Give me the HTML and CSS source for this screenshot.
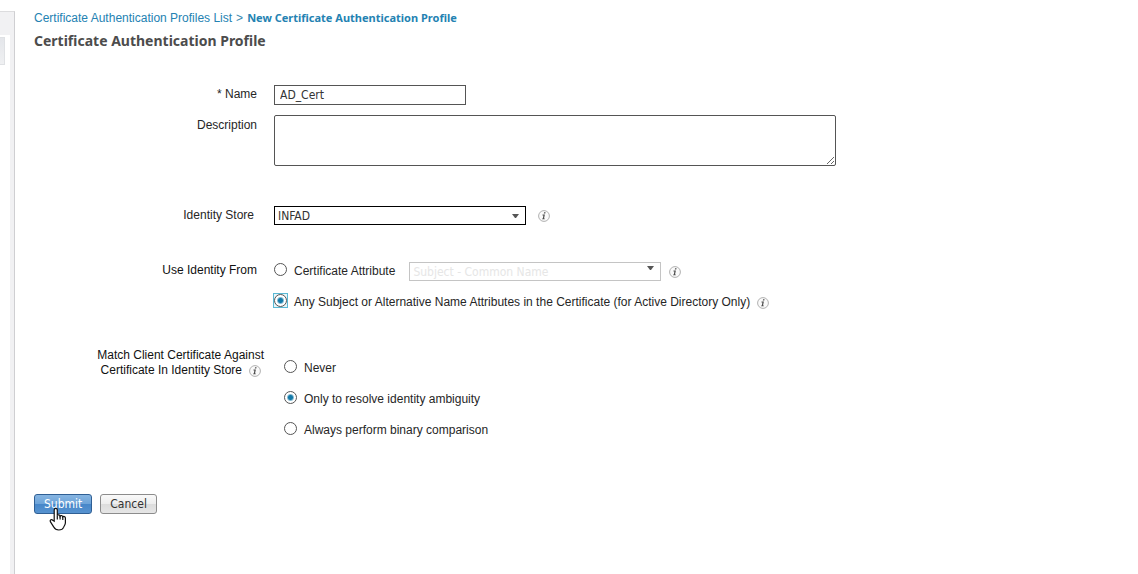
FILE: index.html
```html
<!DOCTYPE html>
<html lang="en">
<head>
<meta charset="utf-8">
<title>New Certificate Authentication Profile</title>
<link rel="stylesheet" href="styles.css">
</head>
<body>
<svg class="defs" aria-hidden="true">
  <symbol id="info" viewBox="0 0 12 12">
    <circle cx="6" cy="6" r="5.4" fill="#fafafa" stroke="#b0b0b0" stroke-width="1"/>
    <path d="M6.1 2.2h1.5l-.3 1.4H5.8zM4.5 4.6h2.4L6 8.4h.9l-.2.9H4.1l.2-.8h.5l.6-3h-.9z" fill="#4c4c4c"/>
  </symbol>
  <symbol id="arrow" viewBox="0 0 7 4">
    <path d="M0 0h7L4 4H3z" fill="#555"/>
  </symbol>
</svg>
<div class="page">
  <aside class="rail"><div class="rail-body"><div class="rail-tab"></div></div></aside>
  <main class="main">
    <nav class="crumbs" aria-label="Breadcrumb">
      <a href="#">Certificate Authentication Profiles List</a><span class="sep">&gt;</span><a class="current" href="#">New Certificate Authentication Profile</a>
    </nav>
    <h1 class="title">Certificate Authentication Profile</h1>
    <form class="form">
      <div class="row">
        <label class="label" for="name">* Name</label>
        <div class="field"><input class="text" id="name" type="text" value="AD_Cert"></div>
      </div>
      <div class="row">
        <label class="label label-area" for="description">Description</label>
        <div class="field"><textarea class="area" id="description"></textarea></div>
      </div>
      <div class="row store">
        <label class="label label-store" for="store">Identity Store</label>
        <div class="field">
          <span class="picker"><select class="select" id="store"><option>INFAD</option></select><svg class="arrow"><use href="#arrow"/></svg></span>
          <svg class="info"><use href="#info"/></svg>
        </div>
      </div>
      <div class="row identity" role="radiogroup" aria-labelledby="from">
        <span class="label label-from" id="from">Use Identity From</span>
        <div class="choices">
          <div class="choice">
            <span class="dot"><input class="radio" type="radio" name="from" id="attribute"></span><label for="attribute">Certificate Attribute</label>
            <span class="picker picker-off"><select class="select" aria-label="Attribute" disabled><option>Subject - Common Name</option></select><svg class="arrow"><use href="#arrow"/></svg></span>
            <svg class="info"><use href="#info"/></svg>
          </div>
          <div class="choice">
            <span class="dot focused"><input class="radio" type="radio" name="from" id="any" checked></span><label for="any">Any Subject or Alternative Name Attributes in the Certificate (for Active Directory Only)</label>
            <svg class="info info-near"><use href="#info"/></svg>
          </div>
        </div>
      </div>
      <div class="row match" role="radiogroup" aria-labelledby="match">
        <span class="label label-match" id="match"><span>Match Client Certificate Against</span><span class="second">Certificate In Identity Store <svg class="info"><use href="#info"/></svg></span></span>
        <div class="choices">
          <div class="choice"><span class="dot"><input class="radio" type="radio" name="match" id="never"></span><label for="never">Never</label></div>
          <div class="choice"><span class="dot"><input class="radio" type="radio" name="match" id="only" checked></span><label for="only">Only to resolve identity ambiguity</label></div>
          <div class="choice"><span class="dot"><input class="radio" type="radio" name="match" id="always"></span><label for="always">Always perform binary comparison</label></div>
        </div>
      </div>
      <div class="actions">
        <button class="button primary" type="button">Submit<svg class="pointer" viewBox="0 0 18 24"><path d="M5.2 14.2V3c0-2.2 3.1-2.2 3.1 0v5.6c.4-1.2 2.7-1 2.8.5.6-1 2.6-.7 2.7.8.7-.8 2.6-.4 2.6 1.2v4.7c0 2.2-1.4 3-1.8 4.6-.8 2-2.4 2.6-4.8 2.6-2.6 0-4-.9-5-2.9L1.5 14.9c-1-2 1.2-3.1 2.3-1.6z" fill="#fff" stroke="#111" stroke-width="1.2"/><path d="M8.3 8.5v4M11.1 9v3.5M13.8 10v3" fill="none" stroke="#111" stroke-width="1.2"/></svg></button>
        <button class="button" type="button">Cancel</button>
      </div>
    </form>
  </main>
</div>
</body>
</html>
```
FILE: styles.css
```css
* { box-sizing: border-box; }
body {
  margin: 0;
  background: #fff;
  color: #262626;
  font: 12px/15px "Liberation Sans", Arial, sans-serif;
}
.defs { position: absolute; width: 0; height: 0; }
.page { display: flex; min-height: 100vh; }

.rail {
  flex: none;
  width: 15px;
  margin-top: 11px;
  padding-top: 23px;
  padding-right: 4px;
  background: #f1f1f3;
  border-top: 1px solid #dcdcde;
  border-right: 1px solid #cfcfd2;
}
.rail-body { height: 100%; padding-top: 2px; background: #fff; }
.rail-tab {
  width: 5px;
  height: 28px;
  background: linear-gradient(#e4e6ea, #eff0f2);
  border: 1px solid #dfe1e4;
  border-left: 0;
}

.main { flex: 1; min-width: 0; padding: 10px 20px 40px 19px; }
.crumbs { display: flex; color: #3a86ae; line-height: 16px; }
.crumbs a { color: #2482b2; text-decoration: none; }
.sep { margin: 0 4px; }
.crumbs .current { font: bold 11px/15px "Noto Sans", Tahoma, sans-serif; }
.title {
  margin: 5px 0 0;
  color: #4c4c4c;
  font: bold 14px/20px "Noto Sans", Tahoma, sans-serif;
}

.form { display: flex; flex-direction: column; padding-top: 34px; }
.row { display: flex; align-items: flex-start; gap: 17px; margin-bottom: 10px; }
.label { flex: none; width: 223px; padding-top: 2px; text-align: right; }
.label-area { padding-top: 3px; }
.field { display: flex; align-items: center; gap: 12px; flex: 1; min-width: 0; }
.text, .area, .select, .button {
  margin: 0;
  font: 12px/16px "DejaVu Sans Condensed", Tahoma, sans-serif;
  color: #333;
}
.text {
  width: 192px;
  height: 20px;
  padding: 0 5px;
  border: 1px solid #555;
}
.area {
  width: 562px;
  height: 51px;
  border: 1px solid #555;
  border-radius: 2px;
}

.picker { position: relative; width: 252px; height: 19px; }
.select {
  display: block;
  appearance: none;
  width: 100%;
  height: 100%;
  padding: 1px 3px 0;
  border: 1px solid #000;
  border-radius: 0;
  background: #fff;
}
.arrow { position: absolute; top: 8px; right: 7px; width: 7px; height: 4px; }
.picker-off { margin: 2px 2px 0 14px; }
.picker-off .select { color: #e6e6e6; border-color: #c4c4c4; opacity: 1; }
.picker-off .arrow { top: 4px; }
.info { flex: none; width: 12px; height: 12px; }

.store { margin-top: 30px; margin-bottom: 30px; }
.label-store { padding-right: 3px; }
.identity { margin-bottom: 31px; }
.label-from, .label-match { color: #111; }
.label-from { padding-top: 8px; }
.choice { display: flex; align-items: center; height: 31px; }
.choice label { padding-top: 1px; }
.choice .picker-off + .info { margin: 2px 0 0 6px; }
.info-near { margin: 2px 0 0 7px; }
.dot { display: flex; flex: none; width: 13px; height: 13px; margin: 0 7px 2px 0; }
.radio {
  appearance: none;
  width: 13px;
  height: 13px;
  margin: 0;
  border: 1px solid #555;
  border-radius: 50%;
  background: #fff;
}
.radio:checked { background: radial-gradient(circle, #1279a8 2px, #fff 4px); }
.focused { background: #e6f6fa; outline: 1px solid #5bb8d4; }

.match { gap: 20px; margin-bottom: 49px; }
.label-match { display: flex; flex-direction: column; width: 230px; padding: 0; }
.second { display: flex; justify-content: flex-end; align-items: center; gap: 7px; padding-right: 3px; }
.match .choices { padding-top: 4px; }

.actions { display: flex; gap: 8px; }
.button {
  position: relative;
  height: 20px;
  padding: 0 9px;
  border: 1px solid #8c8c8c;
  border-radius: 3px;
  background: linear-gradient(#fafafa, #ededed 50%, #dcdcdc 50%, #e6e6e6);
}
.primary {
  color: #fff;
  border-color: #2f5f94;
  background: linear-gradient(#86b5e2, #6da3d8 50%, #4686c9 50%, #5793d0);
}
.pointer { position: absolute; top: 12px; left: 14px; width: 18px; height: 24px; }
```
